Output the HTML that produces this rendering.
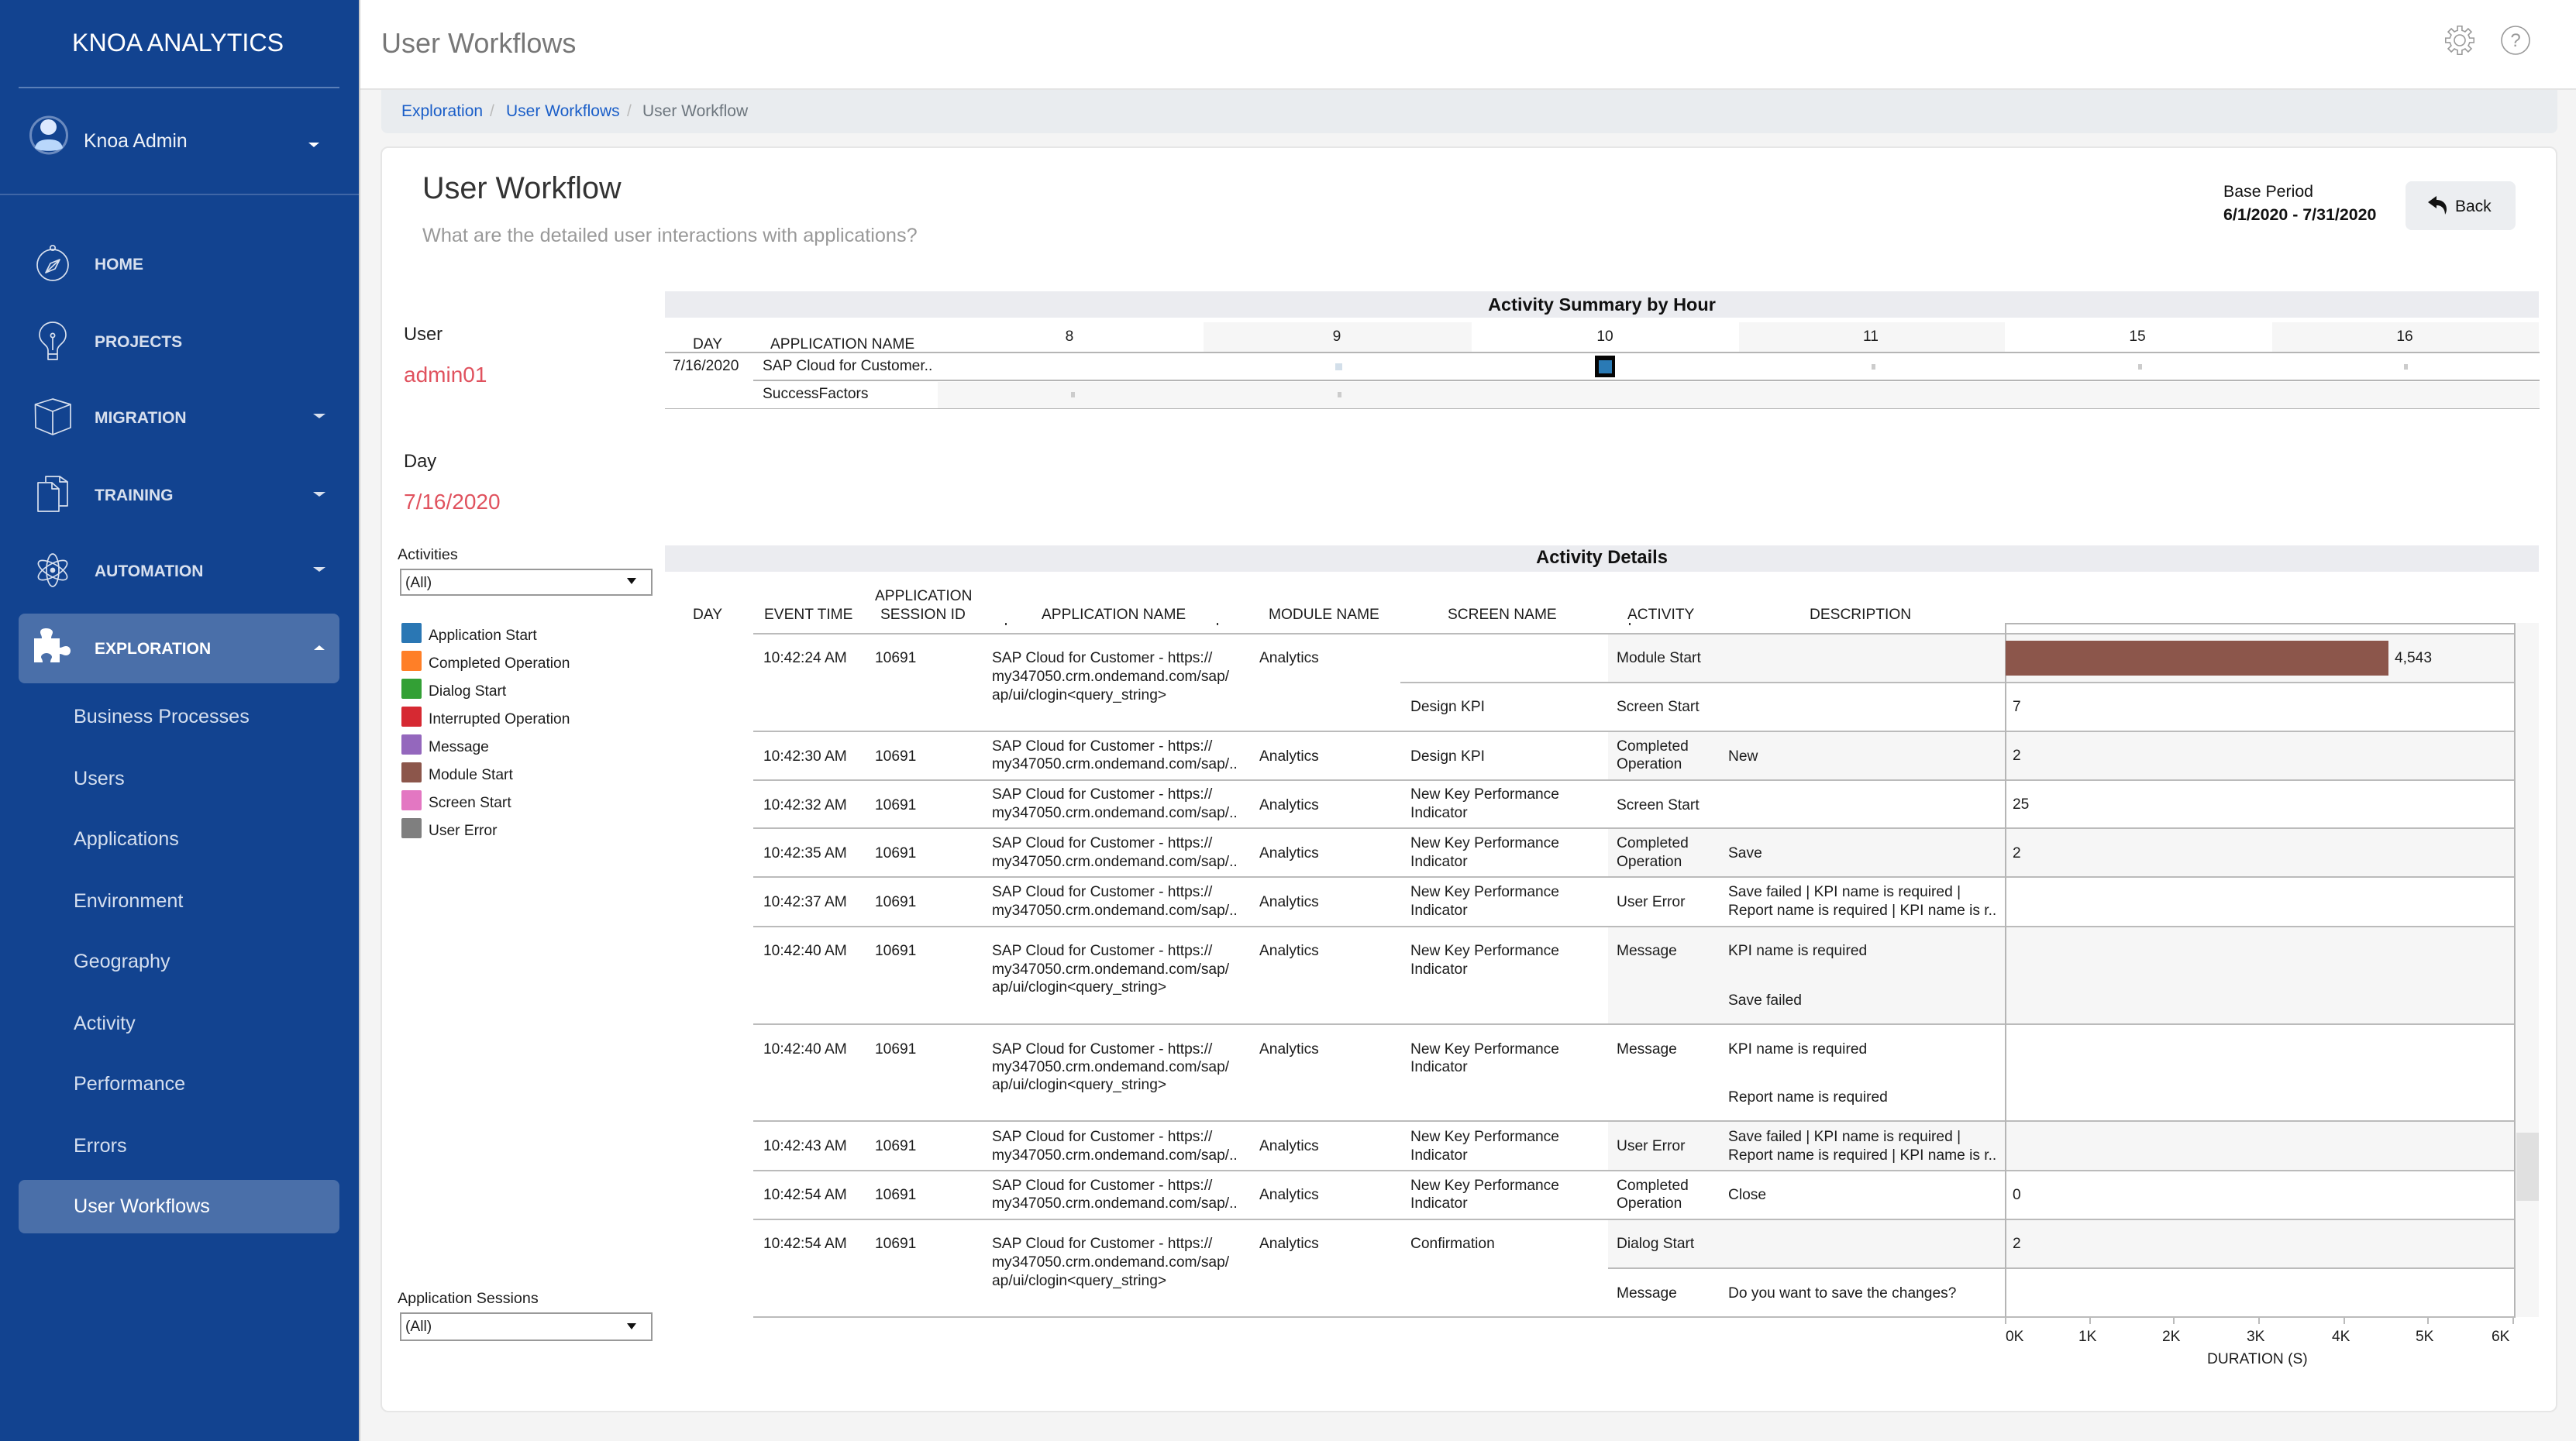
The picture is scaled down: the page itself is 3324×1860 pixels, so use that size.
<!DOCTYPE html>
<html lang="en">
<head>
<meta charset="utf-8">
<title>User Workflow</title>
<style>
html,body{margin:0;padding:0;width:3324px;height:1860px;overflow:hidden;background:#f4f4f4}
body{position:relative;font-family:"Liberation Sans",Arial,sans-serif;color:#1c1c1c}
div,span,svg{position:absolute;display:block}
.t{white-space:nowrap;line-height:24px;font-size:19.2px;height:24px;margin-top:2px}
.c{transform:translateX(-50%)}
.n{font-weight:bold;font-size:21px;color:#d8e0ee;left:122px;line-height:28px;height:28px;white-space:nowrap;margin-top:2px}
.s{font-size:25.2px;color:#d5dfef;left:95px;line-height:30px;height:30px;white-space:nowrap;margin-top:2px}
.l{background:#bbb;height:2px;left:972px;width:2274px}
.g{background:#f6f6f6;left:2075px;width:1171px}
.sw{left:518px;width:26px;height:26px;border-radius:2px}
.m{background:#ccc;width:5px;height:7px}
.tick{background:#bbb;width:2px;height:9px;top:1700px}
.tk{background:#333;width:2px;height:3px;top:804px}
</style>
</head>
<body>

<!-- header -->
<div style="left:464px;top:0;width:2860px;height:114px;background:#fff;border-bottom:2px solid #e4e4e4"></div>
<div class="t" style="left:492px;top:32px;font-size:36px;line-height:44px;height:44px;color:#777">User Workflows</div>
<svg style="left:3155px;top:33px" width="38" height="38" viewBox="-19 -19 38 38" fill="none" stroke="#999" stroke-width="1.6">
<path id="gt" d="M-4.97 -12 L-2.92 -12.67 L-2.89 -18.27 L2.89 -18.27 L2.92 -12.67 L4.97 -12"/>
<path transform="rotate(45)" d="M-4.97 -12 L-2.92 -12.67 L-2.89 -18.27 L2.89 -18.27 L2.92 -12.67 L4.97 -12"/>
<path transform="rotate(90)" d="M-4.97 -12 L-2.92 -12.67 L-2.89 -18.27 L2.89 -18.27 L2.92 -12.67 L4.97 -12"/>
<path transform="rotate(135)" d="M-4.97 -12 L-2.92 -12.67 L-2.89 -18.27 L2.89 -18.27 L2.92 -12.67 L4.97 -12"/>
<path transform="rotate(180)" d="M-4.97 -12 L-2.92 -12.67 L-2.89 -18.27 L2.89 -18.27 L2.92 -12.67 L4.97 -12"/>
<path transform="rotate(225)" d="M-4.97 -12 L-2.92 -12.67 L-2.89 -18.27 L2.89 -18.27 L2.92 -12.67 L4.97 -12"/>
<path transform="rotate(270)" d="M-4.97 -12 L-2.92 -12.67 L-2.89 -18.27 L2.89 -18.27 L2.92 -12.67 L4.97 -12"/>
<path transform="rotate(315)" d="M-4.97 -12 L-2.92 -12.67 L-2.89 -18.27 L2.89 -18.27 L2.92 -12.67 L4.97 -12"/>
<circle r="7"/>
</svg>
<svg style="left:3227px;top:33px" width="38" height="38" viewBox="0 0 38 38" fill="none" stroke="#999" stroke-width="1.6">
<circle cx="19" cy="19" r="18"/>
<text x="19" y="27" text-anchor="middle" font-family="Liberation Sans" font-size="24" fill="#999" stroke="none">?</text>
</svg>

<!-- breadcrumb -->
<div style="left:492px;top:116px;width:2808px;height:56px;background:#e9ecef;border-radius:0 0 8px 8px"></div>
<div class="t" style="left:518px;top:130px;font-size:21px;color:#1a5ec8">Exploration</div>
<div class="t" style="left:632px;top:130px;font-size:21px;color:#bbb">/</div>
<div class="t" style="left:653px;top:130px;font-size:21px;color:#1a5ec8">User Workflows</div>
<div class="t" style="left:809px;top:130px;font-size:21px;color:#bbb">/</div>
<div class="t" style="left:829px;top:130px;font-size:21px;color:#6c757d">User Workflow</div>

<!-- card -->
<div style="left:491px;top:189px;width:2805px;height:1630px;background:#fff;border:2px solid #e6e6e6;border-radius:10px"></div>
<div class="t" style="left:545px;top:217px;font-size:39.6px;line-height:48px;height:48px;color:#333">User Workflow</div>
<div class="t" style="left:545px;top:287px;font-size:25.25px;line-height:30px;height:30px;color:#999">What are the detailed user interactions with applications?</div>

<div class="t" style="left:2869px;top:233px;font-size:21.3px;color:#111">Base Period</div>
<div class="t" style="left:2869px;top:263px;font-size:21.4px;font-weight:bold;color:#111">6/1/2020 - 7/31/2020</div>
<div style="left:3104px;top:234px;width:142px;height:63px;background:#eceef1;border-radius:8px"></div>
<svg style="left:3133px;top:253px" width="25" height="24" viewBox="0 0 25 24"><path fill="#111" d="M0 8 L11 0 V5 C19 5 24 10 24 17 C24 20 23 22 22 24 C22 18 19 12 11 12 V16 Z"/></svg>
<div class="t" style="left:3168px;top:253px;font-size:21px;color:#111">Back</div>

<div class="t" style="left:521px;top:418px;font-size:23.7px;color:#222">User</div>
<div class="t" style="left:521px;top:470px;font-size:28px;color:#e0525e">admin01</div>
<div class="t" style="left:521px;top:582px;font-size:23.7px;color:#222">Day</div>
<div class="t" style="left:521px;top:634px;font-size:28px;color:#e0525e">7/16/2020</div>

<!-- filters -->
<div class="t" style="left:513px;top:702px;font-size:19.7px">Activities</div>
<div style="left:516px;top:734px;width:322px;height:31px;border:2px solid #999;background:#fff"></div>
<div class="t" style="left:523px;top:739px">(All)</div>
<svg style="left:809px;top:746px" width="12" height="8"><path d="M0 0H12L6 8Z" fill="#111"/></svg>

<div class="sw" style="top:804px;background:#2a77b4"></div><div class="t" style="left:553px;top:807px">Application Start</div>
<div class="sw" style="top:840px;background:#ff7f27"></div><div class="t" style="left:553px;top:843px">Completed Operation</div>
<div class="sw" style="top:876px;background:#33a035"></div><div class="t" style="left:553px;top:879px">Dialog Start</div>
<div class="sw" style="top:912px;background:#d62932"></div><div class="t" style="left:553px;top:915px">Interrupted Operation</div>
<div class="sw" style="top:948px;background:#9467bd"></div><div class="t" style="left:553px;top:951px">Message</div>
<div class="sw" style="top:984px;background:#8c564b"></div><div class="t" style="left:553px;top:987px">Module Start</div>
<div class="sw" style="top:1020px;background:#e377c2"></div><div class="t" style="left:553px;top:1023px">Screen Start</div>
<div class="sw" style="top:1056px;background:#7f7f7f"></div><div class="t" style="left:553px;top:1059px">User Error</div>

<div class="t" style="left:513px;top:1662px;font-size:19.7px">Application Sessions</div>
<div style="left:516px;top:1694px;width:322px;height:33px;border:2px solid #999;background:#fff"></div>
<div class="t" style="left:523px;top:1699px">(All)</div>
<svg style="left:809px;top:1708px" width="12" height="8"><path d="M0 0H12L6 8Z" fill="#111"/></svg>

<!-- summary -->
<div style="left:858px;top:376px;width:2418px;height:34px;background:#ebecf0"></div>
<div class="t c" style="left:2067px;top:379px;font-size:23.5px;font-weight:bold;color:#111">Activity Summary by Hour</div>
<div style="left:1553px;top:416px;width:346px;height:38px;background:#f6f6f6"></div>
<div style="left:2244px;top:416px;width:343px;height:38px;background:#f6f6f6"></div>
<div style="left:2932px;top:416px;width:344px;height:38px;background:#f6f6f6"></div>
<div style="left:1210px;top:493px;width:2067px;height:34px;background:#f6f6f6"></div>
<div class="t c" style="left:913px;top:431px">DAY</div>
<div class="t" style="left:994px;top:431px">APPLICATION NAME</div>
<div class="t c" style="left:1380px;top:421px">8</div>
<div class="t c" style="left:1725px;top:421px">9</div>
<div class="t c" style="left:2071px;top:421px">10</div>
<div class="t c" style="left:2414px;top:421px">11</div>
<div class="t c" style="left:2758px;top:421px">15</div>
<div class="t c" style="left:3103px;top:421px">16</div>
<div style="left:858px;top:454px;width:2419px;height:2px;background:#b5b5b5"></div>
<div style="left:972px;top:490px;width:2305px;height:2px;background:#b5b5b5"></div>
<div style="left:858px;top:527px;width:2419px;height:1px;background:#b5b5b5"></div>
<div class="t" style="left:868px;top:459px">7/16/2020</div>
<div class="t" style="left:984px;top:459px">SAP Cloud for Customer..</div>
<div class="t" style="left:984px;top:495px">SuccessFactors</div>
<div style="left:1723px;top:469px;width:9px;height:9px;background:#d3dfea"></div>
<div style="left:2058px;top:459px;width:26px;height:28px;background:#050505"></div>
<div style="left:2063px;top:465px;width:17px;height:17px;background:#2a7ab5"></div>
<div class="m" style="left:2415px;top:470px"></div>
<div class="m" style="left:2759px;top:470px"></div>
<div class="m" style="left:3102px;top:470px"></div>
<div class="m" style="left:1382px;top:506px"></div>
<div class="m" style="left:1726px;top:506px"></div>

<!-- details -->
<div style="left:858px;top:704px;width:2418px;height:34px;background:#ebecf0"></div>
<div class="t c" style="left:2067px;top:706px;font-size:23.7px;font-weight:bold;color:#111">Activity Details</div>

<div class="t" style="left:894px;top:780px">DAY</div>
<div class="t" style="left:986px;top:780px">EVENT TIME</div>
<div class="t" style="left:1129px;top:756px">APPLICATION</div>
<div class="t" style="left:1136px;top:780px">SESSION ID</div>
<div class="t" style="left:1344px;top:780px">APPLICATION NAME</div>
<div class="t" style="left:1637px;top:780px">MODULE NAME</div>
<div class="t" style="left:1868px;top:780px">SCREEN NAME</div>
<div class="t" style="left:2100px;top:780px">ACTIVITY</div>
<div class="t" style="left:2335px;top:780px">DESCRIPTION</div>
<div class="tk" style="left:1297px"></div><div class="tk" style="left:1570px"></div><div class="tk" style="left:2102px"></div>

<!-- chart bg, scrollbar -->
<div style="left:3247px;top:804px;width:29px;height:896px;background:#f6f6f6"></div>
<div style="left:3247px;top:1462px;width:29px;height:88px;background:#e0e0e0"></div>

<!-- stripes -->
<div class="g" style="top:818px;height:63px"></div>
<div class="g" style="top:944px;height:63px"></div>
<div class="g" style="top:1069px;height:63px"></div>
<div class="g" style="top:1196px;height:126px"></div>
<div class="g" style="top:1447px;height:64px"></div>
<div class="g" style="top:1574px;height:63px"></div>

<!-- lines -->
<div class="l" style="top:817px"></div>
<div class="l" style="top:880px;left:1807px;width:1439px"></div>
<div class="l" style="top:943px"></div>
<div class="l" style="top:1006px"></div>
<div class="l" style="top:1068px"></div>
<div class="l" style="top:1131px"></div>
<div class="l" style="top:1195px"></div>
<div class="l" style="top:1321px"></div>
<div class="l" style="top:1446px"></div>
<div class="l" style="top:1510px"></div>
<div class="l" style="top:1573px"></div>
<div class="l" style="top:1636px;left:2075px;width:1171px"></div>
<div class="l" style="top:1699px"></div>

<!-- chart frame -->
<div style="left:2587px;top:804px;width:659px;height:896px;border:solid #b5b5b5;border-width:2px 2px 0 2px;box-sizing:border-box"></div>
<div style="left:2588px;top:827px;width:494px;height:45px;background:#8c564b"></div>
<div class="t" style="left:3090px;top:836px">4,543</div>
<div class="t" style="left:2597px;top:899px">7</div>
<div class="t" style="left:2597px;top:962px">2</div>
<div class="t" style="left:2597px;top:1025px">25</div>
<div class="t" style="left:2597px;top:1088px">2</div>
<div class="t" style="left:2597px;top:1529px">0</div>
<div class="t" style="left:2597px;top:1592px">2</div>

<!-- axis -->
<div class="tick" style="left:2587px"></div><div class="tick" style="left:2696px"></div><div class="tick" style="left:2804px"></div><div class="tick" style="left:2914px"></div><div class="tick" style="left:3024px"></div><div class="tick" style="left:3132px"></div><div class="tick" style="left:3242px"></div>
<div class="t" style="left:2588px;top:1712px">0K</div>
<div class="t" style="left:2682px;top:1712px">1K</div>
<div class="t" style="left:2790px;top:1712px">2K</div>
<div class="t" style="left:2899px;top:1712px">3K</div>
<div class="t" style="left:3009px;top:1712px">4K</div>
<div class="t" style="left:3117px;top:1712px">5K</div>
<div class="t" style="left:3215px;top:1712px">6K</div>
<div class="t" style="left:2848px;top:1741px">DURATION (S)</div>

<!-- row A -->
<div class="t" style="left:985px;top:836px">10:42:24 AM</div><div class="t" style="left:1129px;top:836px">10691</div>
<div class="t" style="left:1280px;top:836px">SAP Cloud for Customer - https://</div>
<div class="t" style="left:1280px;top:860px">my347050.crm.ondemand.com/sap/</div>
<div class="t" style="left:1280px;top:884px">ap/ui/clogin&lt;query_string&gt;</div>
<div class="t" style="left:1625px;top:836px">Analytics</div>
<div class="t" style="left:2086px;top:836px">Module Start</div>
<div class="t" style="left:1820px;top:899px">Design KPI</div>
<div class="t" style="left:2086px;top:899px">Screen Start</div>
<!-- row B -->
<div class="t" style="left:985px;top:963px">10:42:30 AM</div><div class="t" style="left:1129px;top:963px">10691</div>
<div class="t" style="left:1280px;top:950px">SAP Cloud for Customer - https://</div>
<div class="t" style="left:1280px;top:973px">my347050.crm.ondemand.com/sap/..</div>
<div class="t" style="left:1625px;top:963px">Analytics</div>
<div class="t" style="left:1820px;top:963px">Design KPI</div>
<div class="t" style="left:2086px;top:950px">Completed</div><div class="t" style="left:2086px;top:973px">Operation</div>
<div class="t" style="left:2230px;top:963px">New</div>
<!-- row C -->
<div class="t" style="left:985px;top:1026px">10:42:32 AM</div><div class="t" style="left:1129px;top:1026px">10691</div>
<div class="t" style="left:1280px;top:1012px">SAP Cloud for Customer - https://</div>
<div class="t" style="left:1280px;top:1036px">my347050.crm.ondemand.com/sap/..</div>
<div class="t" style="left:1625px;top:1026px">Analytics</div>
<div class="t" style="left:1820px;top:1012px">New Key Performance</div><div class="t" style="left:1820px;top:1036px">Indicator</div>
<div class="t" style="left:2086px;top:1026px">Screen Start</div>
<!-- row D -->
<div class="t" style="left:985px;top:1088px">10:42:35 AM</div><div class="t" style="left:1129px;top:1088px">10691</div>
<div class="t" style="left:1280px;top:1075px">SAP Cloud for Customer - https://</div>
<div class="t" style="left:1280px;top:1099px">my347050.crm.ondemand.com/sap/..</div>
<div class="t" style="left:1625px;top:1088px">Analytics</div>
<div class="t" style="left:1820px;top:1075px">New Key Performance</div><div class="t" style="left:1820px;top:1099px">Indicator</div>
<div class="t" style="left:2086px;top:1075px">Completed</div><div class="t" style="left:2086px;top:1099px">Operation</div>
<div class="t" style="left:2230px;top:1088px">Save</div>
<!-- row E -->
<div class="t" style="left:985px;top:1151px">10:42:37 AM</div><div class="t" style="left:1129px;top:1151px">10691</div>
<div class="t" style="left:1280px;top:1138px">SAP Cloud for Customer - https://</div>
<div class="t" style="left:1280px;top:1162px">my347050.crm.ondemand.com/sap/..</div>
<div class="t" style="left:1625px;top:1151px">Analytics</div>
<div class="t" style="left:1820px;top:1138px">New Key Performance</div><div class="t" style="left:1820px;top:1162px">Indicator</div>
<div class="t" style="left:2086px;top:1151px">User Error</div>
<div class="t" style="left:2230px;top:1138px">Save failed | KPI name is required |</div>
<div class="t" style="left:2230px;top:1162px">Report name is required | KPI name is r..</div>
<!-- row F -->
<div class="t" style="left:985px;top:1214px">10:42:40 AM</div><div class="t" style="left:1129px;top:1214px">10691</div>
<div class="t" style="left:1280px;top:1214px">SAP Cloud for Customer - https://</div>
<div class="t" style="left:1280px;top:1238px">my347050.crm.ondemand.com/sap/</div>
<div class="t" style="left:1280px;top:1261px">ap/ui/clogin&lt;query_string&gt;</div>
<div class="t" style="left:1625px;top:1214px">Analytics</div>
<div class="t" style="left:1820px;top:1214px">New Key Performance</div><div class="t" style="left:1820px;top:1238px">Indicator</div>
<div class="t" style="left:2086px;top:1214px">Message</div>
<div class="t" style="left:2230px;top:1214px">KPI name is required</div>
<div class="t" style="left:2230px;top:1278px">Save failed</div>
<!-- row G -->
<div class="t" style="left:985px;top:1341px">10:42:40 AM</div><div class="t" style="left:1129px;top:1341px">10691</div>
<div class="t" style="left:1280px;top:1341px">SAP Cloud for Customer - https://</div>
<div class="t" style="left:1280px;top:1364px">my347050.crm.ondemand.com/sap/</div>
<div class="t" style="left:1280px;top:1387px">ap/ui/clogin&lt;query_string&gt;</div>
<div class="t" style="left:1625px;top:1341px">Analytics</div>
<div class="t" style="left:1820px;top:1341px">New Key Performance</div><div class="t" style="left:1820px;top:1364px">Indicator</div>
<div class="t" style="left:2086px;top:1341px">Message</div>
<div class="t" style="left:2230px;top:1341px">KPI name is required</div>
<div class="t" style="left:2230px;top:1403px">Report name is required</div>
<!-- row H -->
<div class="t" style="left:985px;top:1466px">10:42:43 AM</div><div class="t" style="left:1129px;top:1466px">10691</div>
<div class="t" style="left:1280px;top:1454px">SAP Cloud for Customer - https://</div>
<div class="t" style="left:1280px;top:1478px">my347050.crm.ondemand.com/sap/..</div>
<div class="t" style="left:1625px;top:1466px">Analytics</div>
<div class="t" style="left:1820px;top:1454px">New Key Performance</div><div class="t" style="left:1820px;top:1478px">Indicator</div>
<div class="t" style="left:2086px;top:1466px">User Error</div>
<div class="t" style="left:2230px;top:1454px">Save failed | KPI name is required |</div>
<div class="t" style="left:2230px;top:1478px">Report name is required | KPI name is r..</div>
<!-- row I -->
<div class="t" style="left:985px;top:1529px">10:42:54 AM</div><div class="t" style="left:1129px;top:1529px">10691</div>
<div class="t" style="left:1280px;top:1517px">SAP Cloud for Customer - https://</div>
<div class="t" style="left:1280px;top:1540px">my347050.crm.ondemand.com/sap/..</div>
<div class="t" style="left:1625px;top:1529px">Analytics</div>
<div class="t" style="left:1820px;top:1517px">New Key Performance</div><div class="t" style="left:1820px;top:1540px">Indicator</div>
<div class="t" style="left:2086px;top:1517px">Completed</div><div class="t" style="left:2086px;top:1540px">Operation</div>
<div class="t" style="left:2230px;top:1529px">Close</div>
<!-- row J -->
<div class="t" style="left:985px;top:1592px">10:42:54 AM</div><div class="t" style="left:1129px;top:1592px">10691</div>
<div class="t" style="left:1280px;top:1592px">SAP Cloud for Customer - https://</div>
<div class="t" style="left:1280px;top:1616px">my347050.crm.ondemand.com/sap/</div>
<div class="t" style="left:1280px;top:1640px">ap/ui/clogin&lt;query_string&gt;</div>
<div class="t" style="left:1625px;top:1592px">Analytics</div>
<div class="t" style="left:1820px;top:1592px">Confirmation</div>
<div class="t" style="left:2086px;top:1592px">Dialog Start</div>
<div class="t" style="left:2086px;top:1656px">Message</div>
<div class="t" style="left:2230px;top:1656px">Do you want to save the changes?</div>

<!-- sidebar -->
<div style="left:0;top:0;width:463px;height:1860px;background:#124390;border-right:2px solid #c9c9c9"></div>
<div class="t" style="left:93px;top:34px;font-size:32.2px;line-height:38px;height:38px;color:#fff">KNOA ANALYTICS</div>
<div style="left:24px;top:112px;width:414px;height:2px;background:#5a7fb8"></div>
<svg style="left:38px;top:149px" width="50" height="51" viewBox="0 0 50 51">
<circle cx="25" cy="25.5" r="23.5" fill="#124390" stroke="#6a8abf" stroke-width="3"/>
<ellipse cx="24.5" cy="15" rx="10.5" ry="10" fill="#dce9ff"/>
<path d="M7 42 C9 33 16 31 25 31 C34 31 41 33 43 42 C38 47 12 47 7 42Z" fill="#b9d7fb"/>
</svg>
<div class="t" style="left:108px;top:166px;font-size:24.8px;line-height:30px;height:30px;color:#eef2f8">Knoa Admin</div>
<svg style="left:398px;top:184px" width="14" height="6"><path d="M0 0H14L7 6Z" fill="#fff"/></svg>
<div style="left:0;top:250px;width:463px;height:2px;background:#3f66a6"></div>

<svg style="left:0;top:300px" width="463" height="480" viewBox="0 300 463 480" fill="none" stroke="#d8e0ee" stroke-width="1.7" stroke-linejoin="round">
<!-- compass -->
<circle cx="68" cy="342" r="20"/><circle cx="68" cy="320" r="3.2"/>
<path d="M77 335 L71 347 L59 352 L65 340 Z M77 335 L59 352"/>
<!-- bulb -->
<path d="M62 452 C62 445 51 443 51 432 A17 16 0 0 1 85 432 C85 443 74 445 74 452 V464 H62 Z M62 457 H74"/>
<circle cx="68" cy="433" r="2.6"/><path d="M68 436 V452"/>
<!-- cube -->
<path d="M45.500 522 L68 515 L91 522 V552 L68 561 L46 552 Z M45.500 522 L68 531 L91 522 M68 531 V561"/>
<!-- docs -->
<path d="M59 622 V615 H77 L87 622 V653 H77 M77 615 V622 H87"/>
<path d="M49 623 H67 L76 631 V660 H49 Z M67 623 V631 H76"/>
<!-- atom -->
<ellipse cx="68" cy="736" rx="21" ry="8" transform="rotate(30 68 736)"/>
<ellipse cx="68" cy="736" rx="21" ry="8" transform="rotate(-30 68 736)"/>
<ellipse cx="68" cy="736" rx="21" ry="8" transform="rotate(90 68 736)"/>
<circle cx="68" cy="736" r="2.5" fill="#d8e0ee"/>
</svg>

<div class="n" style="top:326px">HOME</div>
<div class="n" style="top:426px">PROJECTS</div>
<div class="n" style="top:524px">MIGRATION</div>
<div class="n" style="top:624px">TRAINING</div>
<div class="n" style="top:722px">AUTOMATION</div>
<svg style="left:404px;top:534px" width="16" height="6"><path d="M0 0H16L8 6Z" fill="#d8e0ee"/></svg>
<svg style="left:404px;top:635px" width="16" height="6"><path d="M0 0H16L8 6Z" fill="#d8e0ee"/></svg>
<svg style="left:404px;top:732px" width="16" height="6"><path d="M0 0H16L8 6Z" fill="#d8e0ee"/></svg>

<div style="left:24px;top:792px;width:414px;height:90px;background:#4a6fa9;border-radius:8px"></div>
<svg style="left:44px;top:811px" width="48" height="45" viewBox="44 811 48 45">
<path fill="#fff" d="M44 824 H54 C54 820 52 819 52 816 C52 812 56 811 60 811 C64 811 68 813 68 816 C68 819 66 820 66 824 H77 V836 C80 836 82 834 85 834 C89 834 91 837 91 840 C91 843 89 846 85 846 C82 846 80 844 77 844 V855 H65 C65 851 67 850 67 848 C67 845 63 843 60 843 C57 843 53 845 53 848 C53 850 55 851 55 855 H44 Z"/>
</svg>
<div class="n" style="top:822px;color:#fff">EXPLORATION</div>
<svg style="left:405px;top:833px" width="14" height="6"><path d="M0 6H14L7 0Z" fill="#fff"/></svg>

<div class="s" style="top:908px">Business Processes</div>
<div class="s" style="top:988px">Users</div>
<div class="s" style="top:1066px">Applications</div>
<div class="s" style="top:1146px">Environment</div>
<div class="s" style="top:1224px">Geography</div>
<div class="s" style="top:1304px">Activity</div>
<div class="s" style="top:1382px">Performance</div>
<div class="s" style="top:1462px">Errors</div>
<div style="left:24px;top:1523px;width:414px;height:69px;background:#4a6fa9;border-radius:8px"></div>
<div class="s" style="top:1540px;color:#fff">User Workflows</div>

</body>
</html>
